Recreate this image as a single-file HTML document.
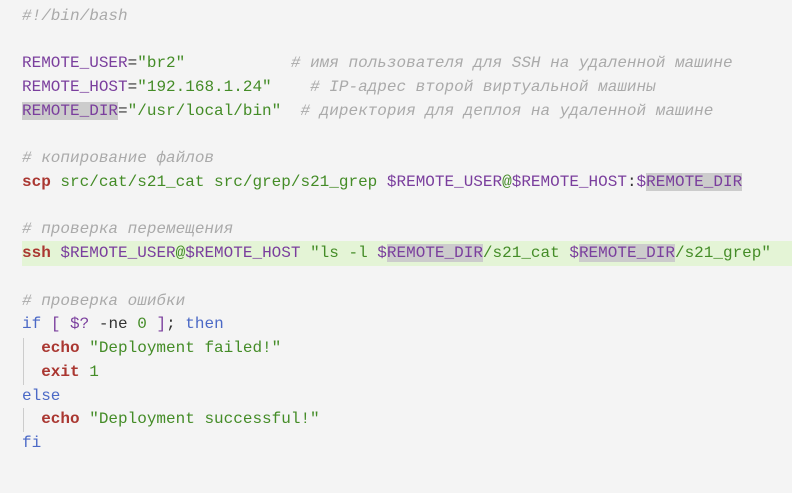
<!DOCTYPE html>
<html><head><meta charset="utf-8"><style>
html,body{margin:0;padding:0;background:#f4f4f4;width:792px;height:493px;overflow:hidden}
pre{margin:0;position:absolute;left:22px;top:5px;font-family:"Liberation Mono","DejaVu Sans Mono",monospace;font-size:16px;line-height:23.72px;color:#333}
.c{color:#aaa;font-style:italic}
.v{color:#7a3e9d}
.s{color:#448c27}
.k{color:#aa3731;font-weight:bold}
.b{color:#4b69c6}
.h{background:#cccccc}
.hl{position:absolute;left:22px;top:241px;width:770px;height:25px;background:#e4f4d6}
.g{position:absolute;left:23px;top:338px;width:1px;height:47px;background:#ccc}
.g2{position:absolute;left:23px;top:408px;width:1px;height:24px;background:#ccc}
</style></head><body>
<div class="hl"></div><div class="g"></div><div class="g2"></div>
<pre><span class="c">#!/bin/bash</span>

<span class="v">REMOTE_USER</span>=<span class="s">"br2"</span>           <span class="c"># имя пользователя для SSH на удаленной машине</span>
<span class="v">REMOTE_HOST</span>=<span class="s">"192.168.1.24"</span>    <span class="c"># IP-адрес второй виртуальной машины</span>
<span class="v h">REMOTE_DIR</span>=<span class="s">"/usr/local/bin"</span>  <span class="c"># директория для деплоя на удаленной машине</span>

<span class="c"># копирование файлов</span>
<span class="k">scp</span> <span class="s">src/cat/s21_cat src/grep/s21_grep</span> <span class="v">$REMOTE_USER</span><span class="s">@</span><span class="v">$REMOTE_HOST</span>:<span class="v">$<span class="h">REMOTE_DIR</span></span>

<span class="c"># проверка перемещения</span>
<span class="k">ssh</span> <span class="v">$REMOTE_USER</span><span class="s">@</span><span class="v">$REMOTE_HOST</span> <span class="s">"ls -l </span><span class="v">$<span class="h">REMOTE_DIR</span></span><span class="s">/s21_cat </span><span class="v">$<span class="h">REMOTE_DIR</span></span><span class="s">/s21_grep"</span>

<span class="c"># проверка ошибки</span>
<span class="b">if</span> <span class="v">[</span> <span class="v">$?</span> -ne <span class="s">0</span> <span class="v">]</span>; <span class="b">then</span>
  <span class="k">echo</span> <span class="s">"Deployment failed!"</span>
  <span class="k">exit</span> <span class="s">1</span>
<span class="b">else</span>
  <span class="k">echo</span> <span class="s">"Deployment successful!"</span>
<span class="b">fi</span></pre>
</body></html>
